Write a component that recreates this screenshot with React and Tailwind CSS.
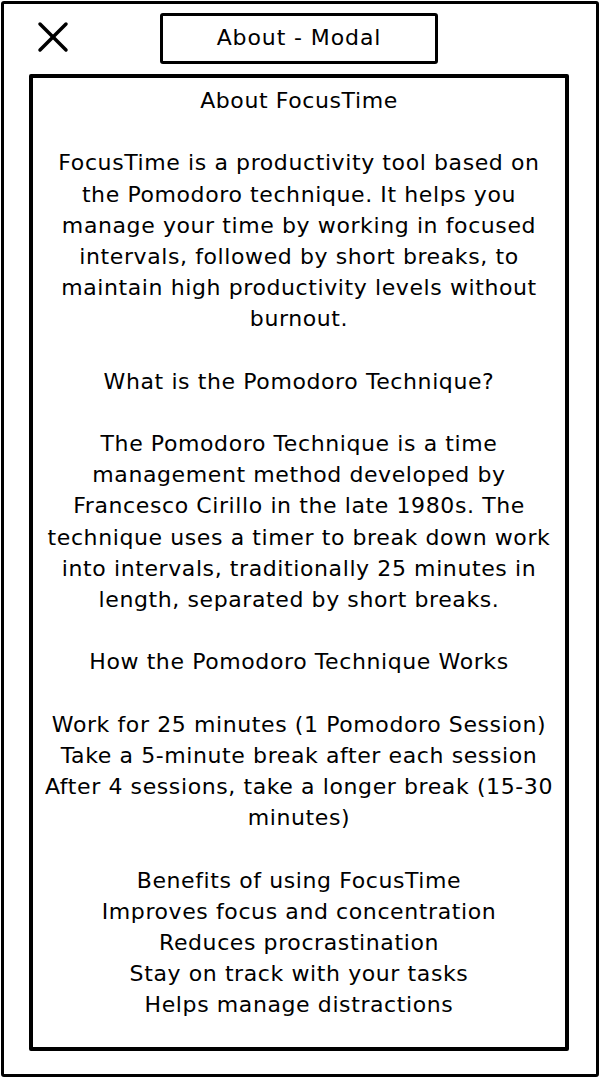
import React from 'react';

const lines = [
  'About FocusTime',
  '',
  'FocusTime is a productivity tool based on',
  'the Pomodoro technique. It helps you',
  'manage your time by working in focused',
  'intervals, followed by short breaks, to',
  'maintain high productivity levels without',
  'burnout.',
  '',
  'What is the Pomodoro Technique?',
  '',
  'The Pomodoro Technique is a time',
  'management method developed by',
  'Francesco Cirillo in the late 1980s. The',
  'technique uses a timer to break down work',
  'into intervals, traditionally 25 minutes in',
  'length, separated by short breaks.',
  '',
  'How the Pomodoro Technique Works',
  '',
  'Work for 25 minutes (1 Pomodoro Session)',
  'Take a 5-minute break after each session',
  'After 4 sessions, take a longer break (15-30',
  'minutes)',
  '',
  'Benefits of using FocusTime',
  'Improves focus and concentration',
  'Reduces procrastination',
  'Stay on track with your tasks',
  'Helps manage distractions',
];

export default function App() {
  return (
    <div
      className="w-[600px] h-[1080px] bg-white p-[1px] text-black"
      style={{ fontFamily: '"DejaVu Sans", sans-serif' }}
    >
      <div className="h-[1076px] border-[3px] border-black rounded-[3px] flex flex-col">
        {/* header */}
        <div className="flex items-start h-[70px]">
          <button className="ml-[31px] mt-[15px] w-[36px] h-[36px] flex items-center justify-center">
            <svg width="34" height="34" viewBox="0 0 34 34" fill="none" stroke="black" strokeWidth="3.5" strokeLinecap="round">
              <path d="M4 4 L30 30" />
              <path d="M30 4 L4 30" />
            </svg>
          </button>
          <div className="ml-[89px] mt-[9px] w-[278px] h-[51px] border-[3px] border-black rounded-[3px] flex items-center justify-center text-[22px] tracking-[0.9px] pb-[2px]">
            About - Modal
          </div>
        </div>

        {/* content */}
        <div className="ml-[25px] w-[540px] h-[977px] border-[4px] border-black rounded-[2px] pt-[7px] text-center text-[22px] tracking-[0.6px] leading-[31.2px]">
          {lines.map((l, i) => (
            <div key={i} className="h-[31.2px] whitespace-nowrap">{l}</div>
          ))}
        </div>
      </div>
    </div>
  );
}
